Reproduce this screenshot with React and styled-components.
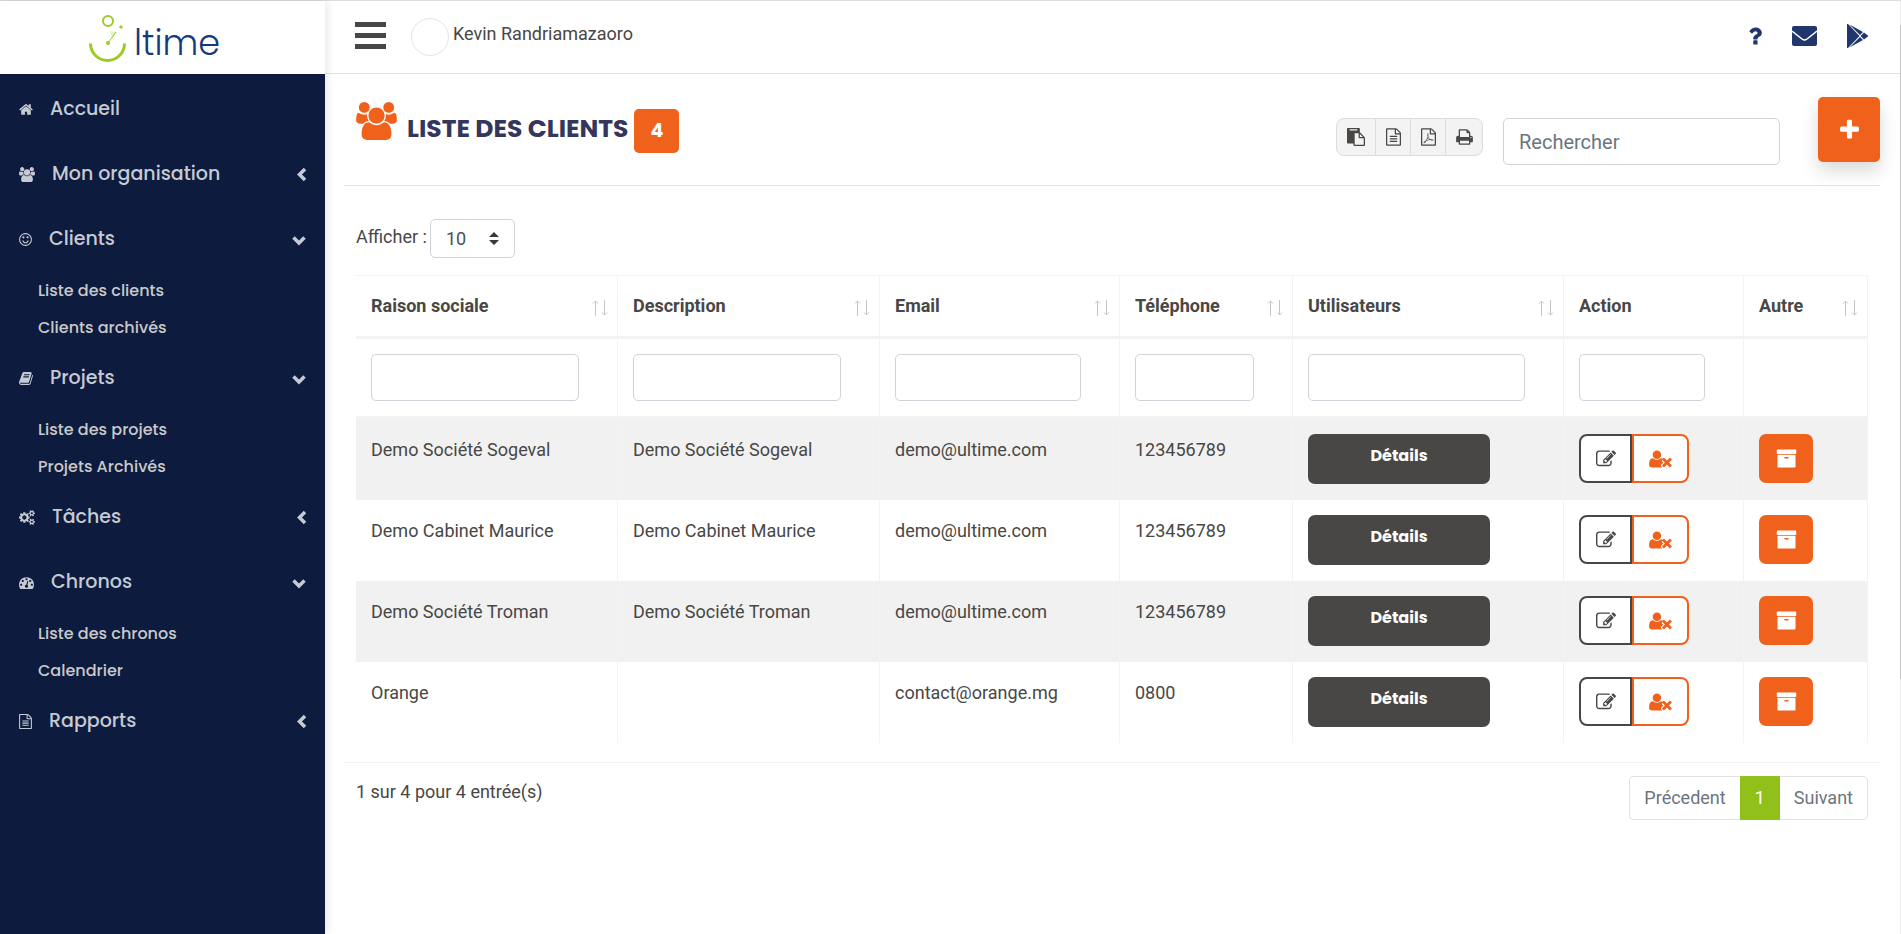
import React from "react";
import styled, { createGlobalStyle } from "styled-components";

const GlobalStyle = createGlobalStyle`
  *, *::before, *::after { box-sizing: border-box; }
  body {
    margin: 0;
    background: #fff;
    color: #484745;
    font-family: Roboto, "Liberation Sans", sans-serif;
    font-size: 18px;
    line-height: 32px;
  }
  a { color: inherit; text-decoration: none; }
  button, input, select { font: inherit; color: inherit; margin: 0; }
  button { cursor: pointer; }
`;

const displayFont = `Poppins, Inter, "Open Sans", sans-serif`;
const orange = "#f0611b";
const dark = "#484745";
const hairline = "#f3f3f3";

/* ---------- icons: [left edge, advance width, path] on a 1792 grid ---------- */
const page =
  "M1596 380q28 28 48 76t20 88v1152q0 40-28 68t-68 28h-1344q-40 0-68-28t-28-68v-1600q0-40 28-68t68-28h896q40 0 88 20t76 48zm-444-244v376h376q-10-29-22-41l-313-313q-12-12-41-22zm384 1528v-1024h-416q-40 0-68-28t-28-68v-416h-768v1536h1280z";

const icons = {
  home: [64, 1664, "M1472 992v480q0 26-19 45t-45 19h-384v-384h-256v384h-384q-26 0-45-19t-19-45v-480q0-1 .5-3t.5-3l575-474 575 474q1 2 1 6zm223-69l-62 74q-8 9-21 11h-3q-13 0-21-7l-692-577-692 577q-12 8-24 7-13-2-21-11l-62-74q-8-10-7-23.5t11-21.5l719-599q32-26 76-26t76 26l244 204v-195q0-14 9-23t23-9h192q14 0 23 9t9 23v408l219 182q10 8 11 21.5t-7 23.5z"],
  users: [0, 1920, "M593 896q-162 5-265 128h-134q-82 0-138-40.5t-56-118.5q0-353 124-353 6 0 43.500 21t97.500 42.500 119 21.500q67 0 133-23-5 37-5 66 0 139 81 256zm1071 637q0 120-73 189.500t-194 69.500h-874q-121 0-194-69.500t-73-189.500q0-53 3.500-103.500t14-109 26.500-108.500 43-97.500 62-81 85.500-53.500 111.500-20q10 0 43 21.500t73 48 107 48 135 21.500 135-21.500 107-48 73-48 43-21.500q61 0 111.500 20t85.500 53.500 62 81 43 97.500 26.500 108.500 14 109 3.500 103.500zm-1024-1277q0 106-75 181t-181 75-181-75-75-181 75-181 181-75 181 75 75 181zm704 384q0 159-112.500 271.500t-271.500 112.500-271.500-112.500-112.500-271.500 112.500-271.500 271.500-112.500 271.500 112.500 112.500 271.500zm576 225q0 78-56 118.500t-138 40.500h-134q-103-123-265-128 81-117 81-256 0-29-5-66 66 23 133 23 59 0 119-21.500t97.500-42.500 43.500-21q124 0 124 353zm-128-609q0 106-75 181t-181 75-181-75-75-181 75-181 181-75 181 75 75 181z"],
  smile: [128, 1536, "M1262 1075q-37 121-138 195t-228 74-228-74-138-195q-8-25 4-48.5t38-31.5q25-8 48.500 4t31.500 38q25 80 92.500 129.500t151.500 49.500 151.500-49.500 92.500-129.500q8-26 32-38t49-4 37 31.500 4 48.500zm-494-435q0 53-37.500 90.500t-90.500 37.500-90.500-37.500-37.500-90.500 37.500-90.500 90.500-37.500 90.500 37.500 37.500 90.500zm512 0q0 53-37.500 90.500t-90.500 37.500-90.500-37.500-37.500-90.500 37.500-90.500 90.500-37.500 90.500 37.500 37.500 90.500zm256 256q0-130-51-248.500t-136.500-204-204-136.500-248.500-51-248.500 51-204 136.500-136.500 204-51 248.500 51 248.500 136.500 204 204 136.500 248.500 51 248.500-51 204-136.500 136.500-204 51-248.500zm128 0q0 209-103 385.500t-279.500 279.500-385.500 103-385.500-103-279.500-279.500-103-385.500 103-385.500 279.500-279.500 385.500-103 385.500 103 279.500 279.500 103 385.500z"],
  book: [64, 1664, "M1703 478q40 57 18 129l-275 906q-19 64-76.500 107.500t-122.500 43.500h-923q-77 0-148.500-53.500t-99.500-131.500q-24-67-2-127 0-4 3-27t4-37q1-8-3-21.500t-3-19.500q2-11 8-21t16.500-23.500 16.500-23.500q23-38 45-91.500t30-91.500q3-10 .5-30t-.5-28q3-11 17-28t17-23q21-36 42-92t25-90q1-9-2.500-32t.5-28q4-13 22-30.500t22-22.500q19-26 42.500-84.500t27.500-96.500q1-8-3-25.500t-2-26.500q2-8 9-18t18-23 17-21q8-12 16.500-30.500t15-35 16-36 19.500-32 26.500-23.500 36-11.500 47.500 5.500l-1 3q38-9 51-9h761q74 0 114 56t18 130l-274 906q-36 119-71.500 153.500t-128.500 34.500h-869q-27 0-38 15-11 16-1 43 24 70 144 70h923q29 0 56-15.500t35-41.500l300-987q7-22 5-57 38 15 59 43zm-1064 2q-4 13 2 22.500t20 9.500h608q13 0 25.500-9.500t16.500-22.500l21-64q4-13-2-22.500t-20-9.500h-608q-13 0-25.500 9.500t-16.500 22.500zm-83 256q-4 13 2 22.500t20 9.500h608q13 0 25.500-9.500t16.500-22.500l21-64q4-13-2-22.500t-20-9.500h-608q-13 0-25.500 9.500t-16.500 22.500z"],
  cogs: [0, 1920, "M896 896q0-106-75-181t-181-75-181 75-75 181 75 181 181 75 181-75 75-181zm768 512q0-52-38-90t-90-38-90 38-38 90q0 53 37.500 90.500t90.500 37.500 90.500-37.500 37.500-90.500zm0-1024q0-52-38-90t-90-38-90 38-38 90q0 53 37.500 90.500t90.500 37.500 90.500-37.500 37.500-90.500zm-384 421v185q0 10-7 19.500t-16 10.500l-155 24q-11 35-32 76 34 48 90 115 7 11 7 20 0 12-7 19-23 30-82.500 89.500t-78.500 59.500q-11 0-21-7l-115-90q-37 19-77 31-11 108-23 155-7 24-30 24h-186q-11 0-20-7.500t-10-17.500l-23-153q-34-10-75-31l-118 89q-7 7-20 7-11 0-21-8-144-133-144-160 0-9 7-19 10-14 41-53t47-61q-23-44-35-82l-152-24q-10-1-17-9.500t-7-19.500v-185q0-10 7-19.500t16-10.500l155-24q11-35 32-76-34-48-90-115-7-11-7-20 0-12 7-20 22-30 82-89t79-59q11 0 21 7l115 90q34-18 77-32 11-108 23-154 7-24 30-24h186q11 0 20 7.500t10 17.500l23 153q34 10 75 31l118-89q8-7 20-7 11 0 21 8 144 133 144 160 0 8-7 19-12 16-42 54t-45 60q23 48 34 82l152 23q10 2 17 10.500t7 19.500zm640 533v140q0 16-149 31-12 27-30 52 51 113 51 138 0 4-4 7-122 71-124 71-8 0-46-47t-52-68q-20 2-30 2t-30-2q-14 21-52 68t-46 47q-2 0-124-71-4-3-4-7 0-25 51-138-18-25-30-52-149-15-149-31v-140q0-16 149-31 13-29 30-52-51-113-51-138 0-4 4-7 4-2 35-20t59-34 30-16q8 0 46 46.500t52 67.500q20-2 30-2t30 2q51-71 92-112l6-2q4 0 124 70 4 3 4 7 0 25-51 138 17 23 30 52 149 15 149 31zm0-1024v140q0 16-149 31-12 27-30 52 51 113 51 138 0 4-4 7-122 71-124 71-8 0-46-47t-52-68q-20 2-30 2t-30-2q-14 21-52 68t-46 47q-2 0-124-71-4-3-4-7 0-25 51-138-18-25-30-52-149-15-149-31v-140q0-16 149-31 13-29 30-52-51-113-51-138 0-4 4-7 4-2 35-20t59-34 30-16q8 0 46 46.500t52 67.500q20-2 30-2t30 2q51-71 92-112l6-2q4 0 124 70 4 3 4 7 0 25-51 138 17 23 30 52 149 15 149 31z"],
  gauge: [0, 1792, "M384 1152q0-53-37.500-90.500t-90.500-37.500-90.500 37.500-37.500 90.500 37.500 90.500 90.500 37.500 90.500-37.500 37.500-90.500zm192-448q0-53-37.500-90.500t-90.500-37.500-90.500 37.500-37.500 90.500 37.500 90.500 90.500 37.500 90.500-37.500 37.500-90.500zm428 481l101-382q6-26-7.500-48.500t-38.500-29.500-48 6.500-30 39.500l-101 382q-60 5-107 43.500t-63 98.500q-20 77 20 146t117 89 146-20 89-117q16-60-6-117t-72-91zm660-33q0-53-37.500-90.500t-90.500-37.500-90.500 37.500-37.500 90.500 37.500 90.500 90.500 37.500 90.500-37.500 37.500-90.500zm-640-640q0-53-37.500-90.500t-90.500-37.500-90.500 37.500-37.500 90.500 37.500 90.500 90.500 37.500 90.500-37.500 37.500-90.500zm448 192q0-53-37.500-90.500t-90.500-37.500-90.500 37.500-37.500 90.500 37.500 90.500 90.500 37.500 90.500-37.500 37.500-90.500zm320 448q0 261-141 483-19 29-54 29h-1402q-35 0-54-29-141-221-141-483 0-182 71-348t191-286 286-191 348-71 348 71 286 191 191 286 71 348z"],
  file: [128, 1536, page + "M512 800q0-14 9-23t23-9h704q14 0 23 9t9 23v64q0 14-9 23t-23 9h-704q-14 0-23-9t-9-23v-64zm736 224q14 0 23 9t9 23v64q0 14-9 23t-23 9h-704q-14 0-23-9t-9-23v-64q0-14 9-23t23-9h704zm0 256q14 0 23 9t9 23v64q0 14-9 23t-23 9h-704q-14 0-23-9t-9-23v-64q0-14 9-23t23-9h704z"],
  pdf: [128, 1536, page + "m-514-593q33 26 84 56 59-7 117-7 147 0 177 49 16 22 2 52 0 1-1 2l-2 2v1q-6 38-71 38-48 0-115-20t-130-53q-221 24-392 83-153 262-242 262-15 0-28-7l-24-12q-1-1-6-5-10-10-6-36 9-40 56-91.500t132-96.500q14-9 23 6 2 2 2 4 52-85 107-197 68-136 104-262-24-82-30.500-159.500t6.500-127.500q11-40 42-40h22q23 0 35 15 18 21 9 68-2 6-4 8 1 3 1 8v30q-2 123-14 192 55 164 146 238zm-576 411q52-24 137-158-51 40-87.500 84t-49.500 74zm398-920q-15 42-2 132 1-7 7-44 0-3 7-43 1-4 4-8-1-1-1-2-1-2-1-3-1-22-13-36 0 1-1 2v2zm-124 661q135-54 284-81-2-1-13-9.500t-16-13.500q-76-67-127-176-27 86-83 197-30 56-45 83zm646-16q-24-24-140-24 76 28 124 28 14 0 18-1 0-1-2-3z"],
  print: [64, 1664, "M448 1536h896v-256h-896v256zm0-640h896v-384h-160q-40 0-68-28t-28-68v-160h-640v640zm1152 64q0-26-19-45t-45-19-45 19-19 45 19 45 45 19 45-19 19-45zm128 0v416q0 13-9.500 22.500t-22.500 9.500h-224v160q0 40-28 68t-68 28h-960q-40 0-68-28t-28-68v-160h-224q-13 0-22.500-9.500t-9.500-22.500v-416q0-79 56.500-135.500t135.500-56.500h64v-544q0-40 28-68t68-28h672q40 0 88 20t76 48l152 152q28 28 48 76t20 88v256h64q79 0 135.500 56.500t56.500 135.500z"],
  paste: [0, 1792, "M768 1664h896v-640h-416q-40 0-68-28t-28-68v-416h-384v1152zm256-1440v-64q0-13-9.500-22.500t-22.500-9.500h-704q-13 0-22.500 9.500t-9.500 22.500v64q0 13 9.500 22.500t22.500 9.500h704q13 0 22.500-9.500t9.500-22.500zm256 672h299l-299-299v299zm512 128v672q0 40-28 68t-68 28h-960q-40 0-68-28t-28-68v-160h-544q-40 0-68-28t-28-68v-1344q0-40 28-68t68-28h1088q40 0 68 28t28 68v328q21 13 36 28l408 408q28 28 48 76t20 88z"],
  plus: [192, 1408, "M1600 736v192q0 40-28 68t-68 28h-416v416q0 40-28 68t-68 28h-192q-40 0-68-28t-28-68v-416h-416q-40 0-68-28t-28-68v-192q0-40 28-68t68-28h416v-416q0-40 28-68t68-28h192q40 0 68 28t28 68v416h416q40 0 68 28t28 68z"],
  edit: [0, 1792, "M888 1184l116-116-152-152-116 116v56h96v96h56zm440-720q-16-16-33 1l-350 350q-17 17-1 33t33-1l350-350q17-17 1-33zm80 594v190q0 119-84.500 203.500t-203.500 84.500h-832q-119 0-203.500-84.500t-84.500-203.500v-832q0-119 84.500-203.500t203.500-84.500h832q63 0 117 25 15 7 18 23 3 17-9 29l-49 49q-14 14-32 8-23-6-45-6h-832q-66 0-113 47t-47 113v832q0 66 47 113t113 47h832q66 0 113-47t47-113v-126q0-13 9-22l64-64q15-15 35-7t20 29zm-96-738l288 288-672 672h-288v-288zm444 132l-92 92-288-288 92-92q28-28 68-28t68 28l152 152q28 28 28 68t-28 68z"],
  userTimes: [0, 2048, "M704 896q-159 0-271.500-112.500t-112.500-271.500 112.500-271.500 271.500-112.500 271.500 112.500 112.500 271.500-112.500 271.500-271.500 112.500zm1077 320l249 249q9 9 9 23 0 13-9 22l-136 136q-9 9-22 9-14 0-23-9l-249-249-249 249q-9 9-23 9-13 0-22-9l-136-136q-9-9-9-22 0-14 9-23l249-249-249-249q-9-9-9-23 0-13 9-22l136-136q9-9 22-9 14 0 23 9l249 249 249-249q9-9 23-9 13 0 22 9l136 136q9 9 9 22 0 14-9 23zm-498 0l-181 181q-37 37-37 91 0 53 37 90l83 83q-21 3-44 3h-874q-121 0-194-69t-73-190q0-53 3.500-103.500t14-109 26.500-108.500 43-97.500 62-81 85.500-53.500 111.500-20q19 0 39 17 79 61 154.500 91.500t164.500 30.500 164.500-30.500 154.500-91.500q20-17 39-17 132 0 217 96h-4q-54 0-91 37.500t-37 90.500q0 54 37 91z"],
  archive: [0, 1792, "M1088 832q0-26-19-45t-45-19h-256q-26 0-45 19t-19 45 19 45 45 19h256q26 0 45-19t19-45zm576-192v960q0 26-19 45t-45 19h-1408q-26 0-45-19t-19-45v-960q0-26 19-45t45-19h1408q26 0 45 19t19 45zm64-448v256q0 26-19 45t-45 19h-1536q-26 0-45-19t-19-45v-256q0-26 19-45t45-19h1536q26 0 45 19t19 45z"],
  question: [384, 1024, "M1088 1256v240q0 16-12 28t-28 12h-240q-16 0-28-12t-12-28v-240q0-16 12-28t28-12h240q16 0 28 12t12 28zm316-600q0 54-15.500 101t-35 76.500-55 59.500-57.500 43.500-61 35.500q-41 23-68.500 65t-27.500 67q0 17-12 32.500t-28 15.500h-240q-15 0-25.500-18.500t-10.500-37.500v-45q0-83 65-156.500t143-108.500q59-27 84-56t25-76q0-42-46.500-74t-107.500-32q-65 0-108 29-35 25-107 115-13 16-31 16-12 0-25-8l-164-125q-13-10-15.500-25t5.500-28q160-266 464-266 80 0 161 31t146 83 106 127.500 41 158.500z"],
};

const IconSvg = styled.svg`
  display: block;
  flex: none;
  fill: currentColor;
`;

function Icon({ name, size }) {
  const [left, advance, d] = icons[name];
  return (
    <IconSvg
      aria-hidden="true"
      viewBox={`${left} 0 ${advance} 1792`}
      width={Math.round((advance / 1792) * size)}
      height={size}
    >
      <path d={d} />
    </IconSvg>
  );
}

/* ---------- shell ---------- */
const Shell = styled.div`
  display: flex;
  min-height: 100vh;
  border-top: 1px solid #dedede;
`;

const Sidebar = styled.aside`
  width: 325px;
  flex: none;
  background: #0d1b3e;
  box-shadow: 0 0 10px rgba(0, 0, 0, 0.14);
  z-index: 1;
`;

const Brand = styled.a`
  display: flex;
  justify-content: center;
  gap: 4px;
  height: 73px;
  padding: 10px 17px 0 0;
  background: #fff;
`;

const BrandName = styled.span`
  color: #17397c;
  font-family: ${displayFont};
  font-weight: 300;
  font-size: 35px;
  line-height: 64px;
`;

const Nav = styled.nav`
  padding-top: 3px;
  color: #c5cad3;
  font-family: ${displayFont};
  font-weight: 500;
`;

const NavLink = styled.a`
  display: flex;
  align-items: center;
  gap: 17px;
  height: 65px;
  padding: 0 18px 0 19px;
  font-size: 19px;
`;

const NavLabel = styled.span`
  flex: 1;
  padding-bottom: 2px;
`;

const SubLink = styled.a`
  display: block;
  padding-left: 38px;
  font-size: 16px;
  line-height: 37px;
  color: #c9c9c9;
`;

const Main = styled.div`
  flex: 1;
  min-width: 0;
`;

const ScrollTrack = styled.div`
  width: 1px;
  flex: none;
  display: flex;
  flex-direction: column;
  background: #ececec;
  padding-top: 24px;
`;

const ScrollThumb = styled.div`
  height: 72%;
  background: #c4c4c4;
`;

const TopBar = styled.header`
  display: flex;
  align-items: center;
  height: 73px;
  padding: 0 31px 0 30px;
  border-bottom: 1px solid #e2e2e2;
`;

const MenuButton = styled.button`
  display: flex;
  flex-direction: column;
  gap: 6px;
  width: 31px;
  padding: 0 0 3px;
  border: 0;
  background: none;
`;

const MenuBar = styled.span`
  height: 5px;
  background: ${dark};
`;

const Avatar = styled.span`
  width: 38px;
  height: 38px;
  margin: 0 4px 0 25px;
  border: 1px solid #e3e5e8;
  border-radius: 50%;
`;

const UserName = styled.span`
  padding-bottom: 6px;
`;

const TopLinks = styled.div`
  display: flex;
  align-items: center;
  gap: 30px;
  margin-left: auto;
  padding-bottom: 3px;
  color: #21376b;
`;

const Content = styled.main`
  padding: 23px 20px 20px 19px;
`;

const TitleBar = styled.section`
  display: flex;
  align-items: flex-start;
  padding: 0 0 20px 12px;
  border-bottom: 1px solid #e3e3e3;
`;

const TitleIcon = styled.span`
  padding: 5px 10px 0 0;
  color: ${orange};
`;

const Title = styled.h1`
  margin: 0;
  padding-top: 12px;
  color: #34365c;
  font-family: ${displayFont};
  font-weight: 700;
  font-size: 25px;
  line-height: 40px;
`;

const Count = styled.span`
  min-width: 45px;
  margin: 12px 0 0 6px;
  border-radius: 5px;
  background: ${orange};
  color: #fff;
  font-family: ${displayFont};
  font-weight: 700;
  font-size: 19px;
  line-height: 44px;
  text-align: center;
`;

const Tools = styled.div`
  display: flex;
  align-items: flex-start;
  margin-left: auto;
`;

const ExportGroup = styled.div`
  display: flex;
  margin: 21px 20px 0 0;
  border: 1px solid #dcdcdc;
  border-radius: 8px;
  background: #f3f3f3;
`;

const ExportButton = styled.button`
  height: 36px;
  padding: 0 10px;
  border: 0;
  background: none;
  & + & {
    padding: 0 9px 0 10px;
    border-left: 1px solid #dcdcdc;
  }
`;

const TextInput = styled.input`
  display: block;
  width: 100%;
  height: 47px;
  padding: 0 15px;
  border: 1px solid #cfd4da;
  border-radius: 5px;
  background: #fff;
`;

const SearchInput = styled(TextInput)`
  width: 277px;
  margin-top: 21px;
  font-size: 20px;
  &::placeholder { color: #6c757d; opacity: 1; }
`;

const AddButton = styled.button`
  display: grid;
  place-items: center;
  width: 62px;
  height: 65px;
  margin-left: 38px;
  padding: 0;
  border: 0;
  border-radius: 5px;
  background: ${orange};
  color: #fff;
  box-shadow: 0 9px 18px rgba(0, 0, 0, 0.15);
`;

const LengthBar = styled.div`
  display: flex;
  gap: 3px;
  padding: 33px 12px 17px;
`;

const LengthLabel = styled.label`
  line-height: 36px;
`;

const SelectBox = styled.span`
  position: relative;
  color: #495057;
`;

const Select = styled.select`
  display: block;
  appearance: none;
  width: 85px;
  height: 39px;
  padding: 0 15px;
  border: 1px solid #cfd4da;
  border-radius: 5px;
  background: #fff;
`;

const SelectMark = styled.svg`
  position: absolute;
  top: 13px;
  right: 16px;
  fill: #343a40;
  pointer-events: none;
`;

const TableWrap = styled.div`
  padding: 0 12px 19px;
  border-bottom: 1px solid #f1f1f1;
`;

const Table = styled.table`
  width: 100%;
  table-layout: fixed;
  border-spacing: 0;
  border-top: 1px solid ${hairline};
`;

const HeadCell = styled.th`
  position: relative;
  height: ${(p) => (p.$filter ? 80 : 63)}px;
  padding: 0 38px 0 15px;
  border-right: 1px solid ${hairline};
  border-bottom: 3px solid ${hairline};
  text-align: left;
  font-weight: 700;
`;

const SortMark = styled.svg`
  position: absolute;
  top: 23px;
  right: 8px;
  fill: none;
  stroke: #c4c4c4;
`;

const Row = styled.tr`
  &:nth-child(odd) { background: #f1f1f1; }
`;

const Cell = styled.td`
  height: 81px;
  padding: 15px 15px 0;
  border-right: 1px solid ${hairline};
  vertical-align: top;
`;

const DetailsButton = styled.button`
  display: block;
  width: 182px;
  height: 50px;
  padding: 0 0 7px;
  border: 0;
  border-radius: 7px;
  background: ${dark};
  color: #fff;
  font-family: ${displayFont};
  font-weight: 700;
  font-size: 16px;
`;

const ActionGroup = styled.div`
  display: flex;
`;

const ActionButton = styled.button`
  display: grid;
  place-items: center;
  width: ${(p) => p.$width}px;
  height: 49px;
  padding: 0;
  border: 2px solid ${(p) => p.$tone};
  border-radius: ${(p) => p.$radius};
  background: ${(p) => (p.$solid ? p.$tone : "#fff")};
  color: ${(p) => (p.$solid ? "#fff" : p.$tone)};
`;

const Footer = styled.div`
  display: flex;
  justify-content: space-between;
  align-items: flex-start;
  padding: 13px 12px 0;
`;

const Pager = styled.nav`
  display: flex;
  color: #6c757d;
  line-height: 42px;
`;

const PageLink = styled.a`
  padding: 0 14px;
  border: 1px solid ${(p) => (p.$active ? "#91c01a" : "#dee2e6")};
  background: ${(p) => (p.$active ? "#91c01a" : "#fff")};
  color: ${(p) => (p.$active ? "#fff" : "inherit")};
  &:first-child { border-right: 0; border-radius: 5px 0 0 5px; }
  &:last-child { border-left: 0; border-radius: 0 5px 5px 0; }
`;

/* ---------- data ---------- */
const menu = [
  { icon: "home", label: "Accueil" },
  { icon: "users", label: "Mon organisation", closed: true },
  { icon: "smile", label: "Clients", items: ["Liste des clients", "Clients archivés"] },
  { icon: "book", label: "Projets", items: ["Liste des projets", "Projets Archivés"] },
  { icon: "cogs", label: "Tâches", closed: true },
  { icon: "gauge", label: "Chronos", items: ["Liste des chronos", "Calendrier"] },
  { icon: "file", label: "Rapports", closed: true },
];

const columns = [
  { label: "Raison sociale", width: 262, sort: true, filter: true },
  { label: "Description", width: 262, sort: true, filter: true },
  { label: "Email", width: 240, sort: true, filter: true },
  { label: "Téléphone", width: 173, sort: true, filter: true },
  { label: "Utilisateurs", width: 271, sort: true, filter: true },
  { label: "Action", width: 180, filter: true },
  { label: "Autre", width: 124, sort: true },
];

const clients = [
  ["Demo Société Sogeval", "Demo Société Sogeval", "demo@ultime.com", "123456789"],
  ["Demo Cabinet Maurice", "Demo Cabinet Maurice", "demo@ultime.com", "123456789"],
  ["Demo Société Troman", "Demo Société Troman", "demo@ultime.com", "123456789"],
  ["Orange", "", "contact@orange.mg", "0800"],
];

const exportsList = [
  ["paste", "Copier"],
  ["file", "Exporter en CSV"],
  ["pdf", "Exporter en PDF"],
  ["print", "Imprimer"],
];

/* ---------- parts ---------- */
function Logo() {
  return (
    <Brand href="#" aria-label="Ultime">
      <svg width="42" height="54" viewBox="0 0 42 54" fill="none" aria-hidden="true">
        <circle cx="20" cy="10" r="5" stroke="#9bcb24" strokeWidth="2" />
        <path d="M2.500 32.500a17 17 0 0 0 34 0" stroke="#9bcb24" strokeWidth="3" />
        <path d="M22 20l7 1-5 6z" fill="#9bcb24" opacity=".25" />
        <path d="M20 32l8-11" stroke="#9bcb24" strokeWidth="1" />
        <circle cx="20" cy="32" r="2" fill="#9bcb24" />
        <path d="M33 14.500l1.500 1.500-1.500 1.500-1.500-1.500z" fill="#9bcb24" stroke="#9bcb24" />
      </svg>
      <BrandName>ltime</BrandName>
    </Brand>
  );
}

function Chevron({ open }) {
  return (
    <svg width="16" height="16" viewBox="0 0 16 16" fill="none" stroke="currentColor" strokeWidth="3.500" aria-hidden="true">
      <path d={open ? "M2.500 5.500L8 11 13.500 5.500" : "M14 2L8.500 7.500l5.500 5.500"} />
    </svg>
  );
}

function MenuEntry({ entry }) {
  return (
    <>
      <NavLink href="#">
        <Icon name={entry.icon} size={15} />
        <NavLabel>{entry.label}</NavLabel>
        {(entry.items || entry.closed) && <Chevron open={!!entry.items} />}
      </NavLink>
      {entry.items?.map((item) => (
        <SubLink href="#" key={item}>{item}</SubLink>
      ))}
    </>
  );
}

function ClientRow({ client }) {
  return (
    <Row>
      {client.map((value, i) => <Cell key={i}>{value}</Cell>)}
      <Cell><DetailsButton type="button">Détails</DetailsButton></Cell>
      <Cell>
        <ActionGroup>
          <ActionButton type="button" aria-label="Modifier" $tone={dark} $width={53} $radius="8px 0 0 8px">
            <Icon name="edit" size={20} />
          </ActionButton>
          <ActionButton type="button" aria-label="Supprimer" $tone={orange} $width={57} $radius="0 8px 8px 0">
            <Icon name="userTimes" size={20} />
          </ActionButton>
        </ActionGroup>
      </Cell>
      <Cell>
        <ActionButton type="button" aria-label="Archiver" $solid $tone={orange} $width={54} $radius="7px">
          <Icon name="archive" size={21} />
        </ActionButton>
      </Cell>
    </Row>
  );
}

export default function App() {
  return (
    <>
      <GlobalStyle />
      <Shell>
        <Sidebar>
          <Logo />
          <Nav>
            {menu.map((entry) => <MenuEntry key={entry.label} entry={entry} />)}
          </Nav>
        </Sidebar>

        <Main>
          <TopBar>
            <MenuButton type="button" aria-label="Menu">
              <MenuBar />
              <MenuBar />
              <MenuBar />
            </MenuButton>
            <Avatar />
            <UserName>Kevin Randriamazaoro</UserName>
            <TopLinks>
              <a href="#" aria-label="Aide"><Icon name="question" size={24} /></a>
              <a href="#" aria-label="Messages">
                <IconSvg width="25" height="20" viewBox="0 0 25 20" aria-hidden="true">
                  <rect width="25" height="20" rx="2" />
                  <path d="M0 5l10 8q2.500 2 5 0l10-8" fill="none" stroke="#fff" strokeWidth="1.500" />
                </IconSvg>
              </a>
              <a href="#" aria-label="Google Play">
                <IconSvg width="22" height="24" viewBox="0 0 22 24" aria-hidden="true">
                  <path d="M0 0h1l11.500 12L1 24H0z" />
                  <path d="M2.500 0.500L16 8l-3 3zM2.500 23.500L16 16l-3-3z" />
                  <path d="M17 8.500l4.500 3.500-4.500 3.500-3.500-3.500z" />
                </IconSvg>
              </a>
            </TopLinks>
          </TopBar>

          <Content>
            <TitleBar>
              <TitleIcon><Icon name="users" size={38} /></TitleIcon>
              <Title>LISTE DES CLIENTS</Title>
              <Count>4</Count>
              <Tools>
                <ExportGroup>
                  {exportsList.map(([icon, label]) => (
                    <ExportButton type="button" key={icon} aria-label={label} title={label}>
                      <Icon name={icon} size={18} />
                    </ExportButton>
                  ))}
                </ExportGroup>
                <SearchInput type="search" placeholder="Rechercher" aria-label="Rechercher" />
                <AddButton type="button" aria-label="Ajouter">
                  <Icon name="plus" size={24} />
                </AddButton>
              </Tools>
            </TitleBar>

            <LengthBar>
              <LengthLabel htmlFor="page-length">Afficher :</LengthLabel>
              <SelectBox>
                <Select id="page-length" defaultValue="10">
                  <option>10</option>
                  <option>25</option>
                  <option>50</option>
                </Select>
                <SelectMark width="10" height="13" viewBox="0 0 10 13" aria-hidden="true">
                  <path d="M0 5l5-5 5 5zM0 8h10l-5 5z" />
                </SelectMark>
              </SelectBox>
            </LengthBar>

            <TableWrap>
              <Table>
                <colgroup>
                  {columns.map((c) => <col key={c.label} width={c.width} />)}
                </colgroup>
                <thead>
                  <tr>
                    {columns.map((c) => (
                      <HeadCell key={c.label} scope="col">
                        {c.label}
                        {c.sort && (
                          <SortMark width="17" height="18" viewBox="0 0 17 18" aria-hidden="true">
                            <path d="M3.500 17V2M1 4.500L3.500 2 6 4.500M12.500 1v15M10 13.500l2.500 2.500 2.500-2.500" />
                          </SortMark>
                        )}
                      </HeadCell>
                    ))}
                  </tr>
                  <tr>
                    {columns.map((c) => (
                      <HeadCell key={c.label} $filter>
                        {c.filter && <TextInput type="text" aria-label={`Filtrer ${c.label}`} />}
                      </HeadCell>
                    ))}
                  </tr>
                </thead>
                <tbody>
                  {clients.map((client) => <ClientRow key={client[0]} client={client} />)}
                </tbody>
              </Table>
            </TableWrap>

            <Footer>
              <span>1 sur 4 pour 4 entrée(s)</span>
              <Pager aria-label="Pagination">
                <PageLink href="#">Précedent</PageLink>
                <PageLink href="#" $active aria-current="page">1</PageLink>
                <PageLink href="#">Suivant</PageLink>
              </Pager>
            </Footer>
          </Content>
        </Main>
        <ScrollTrack><ScrollThumb /></ScrollTrack>
      </Shell>
    </>
  );
}
